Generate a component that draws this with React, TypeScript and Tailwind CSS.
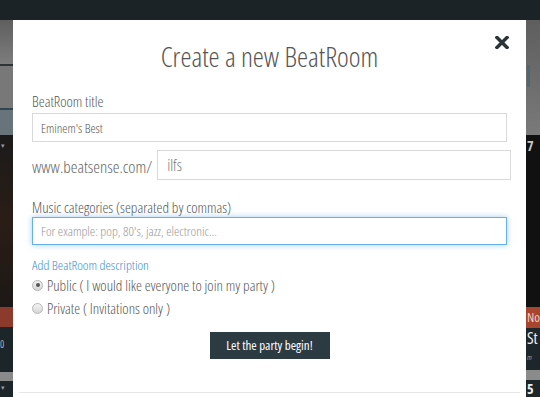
import React, { useState } from 'react';

const font = { fontFamily: '"Open Sans", "Liberation Sans", sans-serif' };

const Radio: React.FC<{ checked?: boolean }> = ({ checked }) => (
  <span className="flex h-[11px] w-[11px] items-center justify-center rounded-full border border-[#b5b5b5] bg-gradient-to-b from-[#f4f4f4] to-[#d6d6d6]">
    {checked && <span className="h-[4px] w-[4px] rounded-full bg-[#555]" />}
  </span>
);

const CloseIcon: React.FC = () => (
  <svg width="14" height="13" viewBox="0 0 14 13">
    <path d="M2 1.5 L12 11.5 M12 1.5 L2 11.5" stroke="#2a3338" strokeWidth="3.4" strokeLinecap="square" />
  </svg>
);

const LeftStrip: React.FC = () => (
  <div className="flex w-[13px] shrink-0 flex-col">
    <div className="h-[44px] bg-gradient-to-b from-[#5f5f5f] to-[#7d7d7d]" />
    <div className="h-[2px] bg-[#2e3336]" />
    <div className="h-[42px] bg-[#787878]" />
    <div className="h-[2px] bg-[#33454e]" />
    <div className="h-[25px] bg-[#69737a]" />
    <div className="relative h-[172px] bg-gradient-to-b from-[#1b1a1a] via-[#2a1d16] to-[#1c1816]">
      <span className="absolute left-[1px] top-[6px] text-[7px] text-[#999]">▾</span>
    </div>
    <div className="h-[20px] bg-[#8c3a2c]" />
    <div className="relative h-[45px] bg-[#1c252a]">
      <span className="absolute left-0 top-[12px] text-[10px] leading-none text-[#aaa]">0</span>
    </div>
    <div className="h-[9px] bg-[#8a8a8a]" />
    <div className="relative flex-1 bg-[#1c252a]">
      <span className="absolute left-[1px] top-[2px] text-[7px] text-[#999]">▾</span>
    </div>
  </div>
);

const RightStrip: React.FC = () => (
  <div className="flex w-[14px] shrink-0 flex-col">
    <div className="relative h-[115px] bg-gradient-to-b from-[#5e5e5e] to-[#7a7a7a]">
      <div className="absolute left-[1px] top-[45px] h-[22px] w-[3px] bg-[#4f6775]" />
    </div>
    <div className="h-[172px] bg-[#111111] pl-[1px] pt-[2px] text-[14px] font-bold leading-[18px] text-[#c8c8c8]" style={font}>
      7
    </div>
    <div className="h-[21px] overflow-hidden whitespace-nowrap bg-[#a8452f] pl-[1px] text-[13px] leading-[21px] text-[#f0d0c8]" style={font}>
      No
    </div>
    <div className="h-[42px] overflow-hidden whitespace-nowrap bg-[#1d262b] pl-[1px]" style={font}>
      <div className="pt-[1px] text-[16px] leading-[18px] text-[#eee]">St</div>
      <div className="mt-[5px] text-[8px] italic leading-[9px] text-[#999]">m</div>
    </div>
    <div className="h-[10px] bg-[#8b8b8b]" />
    <div className="flex-1 overflow-hidden bg-[#1d262b] pl-[1px] text-[14px] font-bold leading-[18px] text-[#eee]" style={font}>
      5
    </div>
  </div>
);

const App: React.FC = () => {
  const [title, setTitle] = useState("Eminem's Best");
  const [slug, setSlug] = useState('ilfs');
  const [categories, setCategories] = useState('');
  const [privacy, setPrivacy] = useState<'public' | 'private'>('public');

  return (
    <div
      className="flex h-[397px] w-[540px] flex-col overflow-hidden bg-[#1b2327]"
      style={{ ...font, fontStretch: 'condensed' }}
    >
      <div className="h-[20px] shrink-0 bg-[#1b2327]" />
      <div className="flex flex-1">
        <LeftStrip />

        <div className="relative flex flex-1 flex-col bg-white px-[19px] pt-[19px] font-light text-[#555]">
          <button className="absolute right-[17px] top-[16px]">
            <CloseIcon />
          </button>

          <h1 className="h-[34px] text-center text-[28px] font-light leading-[34px] text-[#555]">
            Create a new BeatRoom
          </h1>

          <label className="mt-[18px] block h-[20px] text-[15px] leading-[20px]">BeatRoom title</label>
          <input
            value={title}
            onChange={(e) => setTitle(e.target.value)}
            className="mt-[2px] h-[29px] w-full border border-[#d9d9d9] px-[8px] text-[13px] font-light text-[#555] outline-none"
          />

          <div className="mr-[-4px] mt-[8px] flex h-[30px] items-center gap-[5px]">
            <span className="pt-[4px] text-[17px] leading-[20px] text-[#666]">www.beatsense.com/</span>
            <input
              value={slug}
              onChange={(e) => setSlug(e.target.value)}
              className="h-[30px] flex-1 border border-[#d9d9d9] px-[9px] text-[16px] font-light text-[#777] outline-none"
            />
          </div>

          <label className="mt-[17px] block h-[20px] text-[15px] leading-[20px]">
            Music categories (separated by commas)
          </label>
          <input
            value={categories}
            onChange={(e) => setCategories(e.target.value)}
            placeholder="For example: pop, 80's, jazz, electronic..."
            className="h-[28px] w-full border border-[#66afe9] px-[8px] text-[13.5px] font-light text-[#555] shadow-[0_0_6px_rgba(102,175,233,0.6)] outline-none placeholder:text-[#999]"
          />

          <a className="mt-[10px] block h-[20px] text-[13.5px] leading-[20px] text-[#3a8fd4]">Add BeatRoom description</a>

          <div className="flex h-[20px] cursor-pointer items-center gap-[4px]" onClick={() => setPrivacy('public')}>
            <Radio checked={privacy === 'public'} />
            <span className="text-[15px] leading-[20px]">Public ( I would like everyone to join my party )</span>
          </div>
          <div className="mt-[3px] flex h-[20px] cursor-pointer items-center gap-[4px]" onClick={() => setPrivacy('private')}>
            <Radio checked={privacy === 'private'} />
            <span className="text-[15px] leading-[20px]">Private ( Invitations only )</span>
          </div>

          <div className="mt-[14px] flex justify-center">
            <button className="h-[27px] w-[120px] bg-[#2c3a42] text-[13px] font-normal text-white">
              Let the party begin!
            </button>
          </div>

          <div className="mx-[-13px] mt-[33px] border-t border-[#e5e5e5]" />
        </div>

        <RightStrip />
      </div>
    </div>
  );
};

export default App;
